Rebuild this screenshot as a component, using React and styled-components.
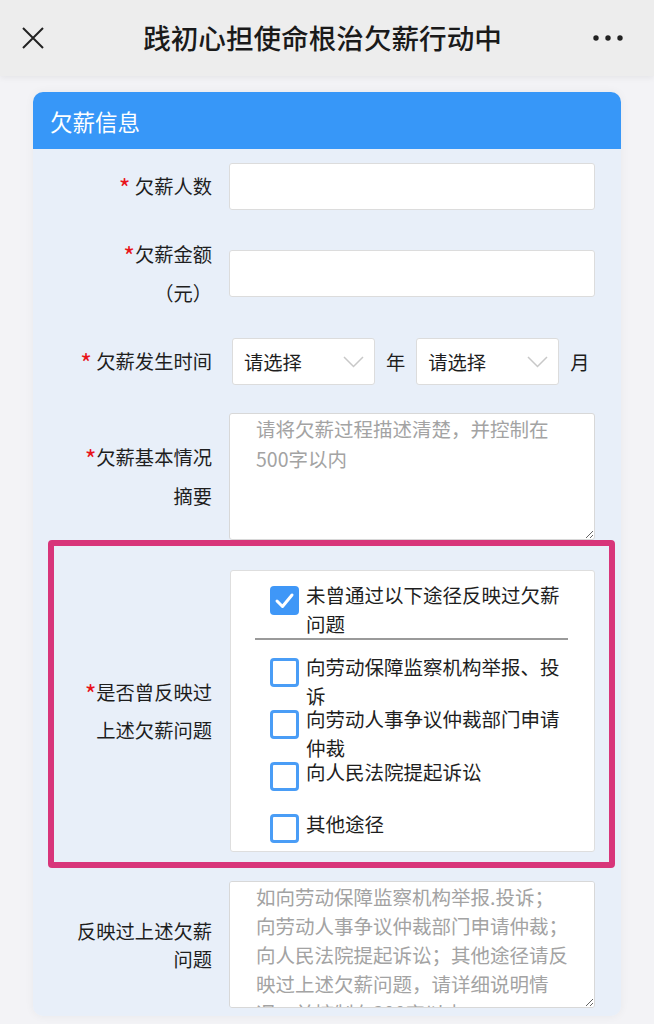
import React from "react";
import styled, { createGlobalStyle } from "styled-components";

const GlobalStyle = createGlobalStyle`
  * { box-sizing: border-box; }
  body {
    margin: 0;
    background: #f3f3f6;
    font-family: "Noto Sans CJK SC", "Noto Sans", sans-serif;
    color: #1e1e1e;
  }
`;

const Page = styled.div`
  width: 654px;
  min-height: 1024px;
  background: #f3f3f6;
`;

const TopBar = styled.header`
  position: relative;
  z-index: 1;
  height: 76px;
  display: flex;
  align-items: center;
  padding: 0 31px 0 22px;
  background: #ededed;
  box-shadow: 0 2px 6px rgba(0, 0, 0, 0.06);
`;

const Side = styled.div`
  width: 40px;
  flex: none;
  display: flex;
  align-items: center;
  justify-content: ${props => (props.$end ? "flex-end" : "flex-start")};
`;

const Title = styled.h1`
  flex: 1;
  margin: 0;
  text-align: center;
  font-size: 27.6px;
  font-weight: 500;
  line-height: 1;
  color: #1a1a1a;
`;

const Main = styled.main`
  padding: 16px 33px 0;
`;

const Card = styled.section`
  border-radius: 10px;
  overflow: hidden;
  box-shadow: 0 0 10px rgba(0, 0, 0, 0.05);
`;

const CardHead = styled.div`
  height: 57px;
  display: flex;
  align-items: center;
  padding-left: 17px;
  background: #3797f8;
  color: #fff;
  font-size: 22.5px;
`;

const CardBody = styled.form`
  display: flow-root;
  margin: 0;
  background: #e8eff9;
  padding: 14px 0 8px;
`;

const Row = styled.div`
  display: flex;
  align-items: center;
  gap: 17px;
  margin-top: ${props => props.$top || 0}px;
  padding-left: 39px;
`;

const HighlightRow = styled(Row)`
  gap: 18px;
  margin: 0 6px 0 15px;
  padding: 24px 14px 10px 18px;
  border: 6px solid #d8357a;
  border-radius: 4px;
`;

const Label = styled.label`
  width: 140px;
  flex: none;
  text-align: right;
  font-size: 19.3px;
  line-height: ${props => props.$lh || 39}px;
  color: #1e1e1e;
`;

const Lead = styled.span`
  white-space: nowrap;
`;

const Star = styled.span`
  color: #e8141b;
  font-size: 25px;
  line-height: 0;
  vertical-align: -4px;
`;

const TextInput = styled.input`
  width: 366px;
  height: 47px;
  margin: 0;
  border: 1px solid #dcdcdc;
  border-radius: 3px;
  background: #fff;
  outline: none;
`;

const DateGroup = styled.div`
  display: flex;
  align-items: center;
  gap: 11px;
  margin-left: 3px;
  font-size: 19.3px;
`;

const SelectBox = styled.div`
  width: 143px;
  height: 47px;
  display: flex;
  align-items: center;
  justify-content: space-between;
  padding: 0 10px 0 11px;
  border: 1px solid #dcdcdc;
  border-radius: 3px;
  background: #fff;
  font-size: 19.3px;
  color: #1e1e1e;
`;

const TextArea = styled.textarea`
  width: 366px;
  height: 127px;
  margin: 0;
  padding: 0 20px 0 26px;
  border: 1px solid #d8d8d8;
  border-radius: 3px;
  background: #fff;
  font-family: "Noto Sans CJK SC", "Noto Sans", sans-serif;
  font-size: 19.5px;
  line-height: ${props => props.$lh}px;
  color: #1e1e1e;
  outline: none;
  &::placeholder {
    color: #a3a3a3;
  }
`;

const CheckGroup = styled.div`
  width: 365px;
  flex: none;
  padding: 10px 26px 8px 24px;
  border: 1px solid #dedede;
  border-radius: 3px;
  background: #fff;
`;

const CheckItem = styled.div`
  display: flex;
  align-items: flex-start;
  gap: 7px;
  padding-left: 15px;
  height: ${props => (props.$h ? `${props.$h}px` : "auto")};
`;

const Box = styled.span`
  width: 29px;
  height: 29px;
  flex: none;
  margin-top: ${props => (props.$checked ? 5 : 4.5)}px;
  border: ${props => (props.$checked ? "none" : "3px solid #4a9df6")};
  border-radius: 4px;
  background: ${props => (props.$checked ? "#3f97f7" : "#fff")};
  display: flex;
  align-items: center;
  justify-content: center;
`;

const ItemText = styled.span`
  font-size: 19.5px;
  line-height: 28.5px;
  color: #1e1e1e;
`;

const Divider = styled.hr`
  height: 2px;
  margin: 0 0 13px;
  border: none;
  background: #9a9a9a;
`;

const CloseIcon = () => (
  <svg width="22" height="22" viewBox="0 0 22 22">
    <path d="M1 1 L21 21 M21 1 L1 21" stroke="#222" strokeWidth="2" fill="none" />
  </svg>
);

const MoreIcon = () => (
  <svg width="30" height="8" viewBox="0 0 30 8">
    <circle cx="3" cy="4" r="2.7" fill="#222" />
    <circle cx="15" cy="4" r="2.7" fill="#222" />
    <circle cx="27" cy="4" r="2.7" fill="#222" />
  </svg>
);

const Chevron = () => (
  <svg width="21" height="12" viewBox="0 0 21 12">
    <path d="M1 1 L10.5 10.5 L20 1" stroke="#c8c8c8" strokeWidth="1.5" fill="none" />
  </svg>
);

const Check = () => (
  <svg width="29" height="29" viewBox="0 0 29 29">
    <polyline points="7,15 12.5,20.5 22,9" stroke="#fff" strokeWidth="3" fill="none" strokeLinecap="round" strokeLinejoin="round" />
  </svg>
);

const routes = [
  { text: "向劳动保障监察机构举报、投诉", h: 52.3 },
  { text: "向劳动人事争议仲裁部门申请仲裁", h: 52.3 },
  { text: "向人民法院提起诉讼", h: 52.3 },
  { text: "其他途径" },
];

const App = () => {
  return (
    <Page>
      <GlobalStyle />
      <TopBar>
        <Side><CloseIcon /></Side>
        <Title>践初心担使命根治欠薪行动中</Title>
        <Side $end><MoreIcon /></Side>
      </TopBar>
      <Main>
        <Card>
          <CardHead>欠薪信息</CardHead>
          <CardBody>
            <Row>
              <Label><Lead><Star>*</Star> 欠薪人数</Lead></Label>
              <TextInput />
            </Row>
            <Row $top={24.5}>
              <Label><Lead><Star>*</Star>欠薪金额</Lead>（元）</Label>
              <TextInput />
            </Row>
            <Row $top={25.5}>
              <Label><Lead><Star>*</Star> 欠薪发生时间</Lead></Label>
              <DateGroup>
                <SelectBox>请选择<Chevron /></SelectBox>
                <span>年</span>
                <SelectBox>请选择<Chevron /></SelectBox>
                <span>月</span>
              </DateGroup>
            </Row>
            <Row $top={28}>
              <Label><Lead><Star>*</Star>欠薪基本情况</Lead>摘要</Label>
              <TextArea
                $lh={30}
                placeholder={"请将欠薪过程描述清楚，并控制在\n500字以内"}
              />
            </Row>
            <HighlightRow>
              <Label $lh={38}><Lead><Star>*</Star>是否曾反映过</Lead>上述欠薪问题</Label>
              <CheckGroup>
                <CheckItem>
                  <Box $checked><Check /></Box>
                  <ItemText>未曾通过以下途径反映过欠薪问题</ItemText>
                </CheckItem>
                <Divider />
                {routes.map((r, id) => (
                  <CheckItem key={id} $h={r.h}>
                    <Box />
                    <ItemText>{r.text}</ItemText>
                  </CheckItem>
                ))}
              </CheckGroup>
            </HighlightRow>
            <Row $top={13}>
              <Label $lh={28}>反映过上述欠薪问题</Label>
              <TextArea
                $lh={29}
                placeholder={
                  "如向劳动保障监察机构举报.投诉；\n向劳动人事争议仲裁部门申请仲裁；\n向人民法院提起诉讼；其他途径请反\n映过上述欠薪问题，请详细说明情\n况，并控制在300字以内"
                }
              />
            </Row>
          </CardBody>
        </Card>
      </Main>
    </Page>
  );
};

export default App;
